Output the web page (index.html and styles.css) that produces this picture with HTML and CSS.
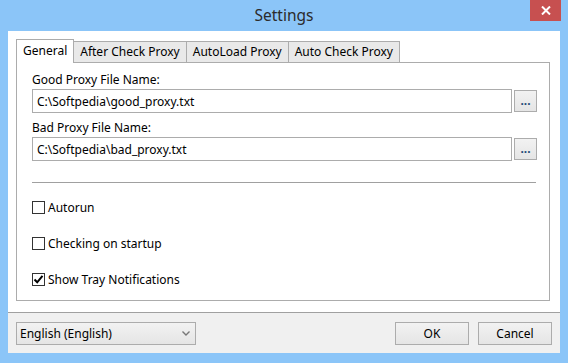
FILE: index.html
```html
<!DOCTYPE html>
<html lang="en">
<head>
  <meta charset="UTF-8">
  <title>Settings</title>
  <link rel="stylesheet" href="styles.css">
</head>
<body>
  <div class="window">
    <div class="titlebar">
      <span class="title">Settings</span>
      <button class="close" aria-label="Close">
        <svg width="10" height="9" viewBox="0 0 10 9"><path d="M1 0.5 L9 8.5 M9 0.5 L1 8.5" stroke="#fff" stroke-width="2"/></svg>
      </button>
    </div>

    <div class="client">
      <div class="main">
        <div class="tabs">
          <div class="tab active">General</div>
          <div class="tab">After Check Proxy</div>
          <div class="tab">AutoLoad Proxy</div>
          <div class="tab">Auto Check Proxy</div>
        </div>

        <div class="panel">
          <label class="field-label">Good Proxy File Name:</label>
          <div class="file-row">
            <input class="path" type="text" value="C:\Softpedia\good_proxy.txt">
            <button class="browse">...</button>
          </div>

          <label class="field-label second">Bad Proxy File Name:</label>
          <div class="file-row">
            <input class="path" type="text" value="C:\Softpedia\bad_proxy.txt">
            <button class="browse">...</button>
          </div>

          <div class="sep"></div>

          <div class="checks">
            <label class="check"><span class="box"></span>Autorun</label>
            <label class="check"><span class="box"></span>Checking on startup</label>
            <label class="check"><span class="box">
              <svg width="11" height="11" viewBox="0 0 11 11"><path d="M1.5 5.5 L4.2 8.3 L9.5 1.8" fill="none" stroke="#000" stroke-width="2"/></svg>
            </span>Show Tray Notifications</label>
          </div>
        </div>
      </div>

      <div class="footer">
        <div class="combo">
          <span>English (English)</span>
          <svg width="8" height="5" viewBox="0 0 8 5"><path d="M0.5 0.5 L4 4 L7.5 0.5" fill="none" stroke="#777" stroke-width="1.4"/></svg>
        </div>
        <div class="buttons">
          <button class="btn">OK</button>
          <button class="btn">Cancel</button>
        </div>
      </div>
    </div>
  </div>
</body>
</html>
```

FILE: styles.css
```css
* {
  box-sizing: border-box;
  margin: 0;
  padding: 0;
}

body {
  font-family: 'Noto Sans', 'Open Sans', sans-serif;
  font-size: 12px;
  color: #000;
  background: #8bc5f8;
}

.window {
  width: 568px;
  height: 363px;
  background: #8bc5f8;
  padding: 0 8px 10px 8px;
  display: flex;
  flex-direction: column;
}

.titlebar {
  height: 31px;
  margin: 0 -8px;
  display: grid;
  grid-template-columns: 38px 1fr 38px;
}

.title {
  grid-column: 2;
  text-align: center;
  line-height: 31px;
  font-size: 15.5px;
  color: #2b2b2b;
}

.close {
  grid-column: 3;
  width: 31px;
  height: 21px;
  border: none;
  background: #c75050;
  display: flex;
  align-items: center;
  justify-content: center;
}

.client {
  flex: 1;
  display: flex;
  flex-direction: column;
  background: #fff;
}

.main {
  flex: 1;
  padding: 8px 10px 11px 8px;
  display: flex;
  flex-direction: column;
}

.tabs {
  display: flex;
  align-items: flex-end;
  height: 23px;
}

.tab {
  height: 21px;
  line-height: 20px;
  padding: 0 6px;
  border: 1px solid #acacac;
  border-bottom: none;
  background: #e9e9e9;
  margin-left: -1px;
}

.tab.active {
  height: 24px;
  line-height: 22px;
  margin-left: 0;
  margin-bottom: -1px;
  padding: 0 6px;
  background: #fff;
  position: relative;
  z-index: 1;
}

.tab.active + .tab {
  margin-left: 0;
  border-left: none;
}

.panel {
  flex: 1;
  border: 1px solid #acacac;
  padding: 9px 12px 0 15px;
}

.field-label {
  display: block;
  line-height: 16px;
  margin-bottom: 1px;
}

.field-label.second {
  margin-top: 7px;
}

.file-row {
  display: flex;
  align-items: center;
  gap: 2px;
}

.path {
  flex: 1;
  height: 24px;
  border: 1px solid #acacac;
  padding: 0 4px;
  font-family: inherit;
  font-size: 12px;
  color: #000;
  outline: none;
}

.browse {
  width: 23px;
  height: 22px;
  border: 1px solid #acacac;
  background: linear-gradient(#f2f2f2, #e5e5e5);
  font-family: inherit;
  font-size: 12px;
  font-weight: bold;
  line-height: 16px;
  color: #1f4a78;
}

.sep {
  height: 1px;
  background: #a0a0a0;
  margin-top: 21px;
  width: 504px;
}

.checks {
  display: flex;
  flex-direction: column;
  gap: 20px;
  margin-top: 16px;
}

.check {
  display: flex;
  align-items: center;
  height: 16px;
  gap: 3px;
}

.box {
  width: 13px;
  height: 13px;
  border: 1px solid #333;
  background: #fff;
  display: flex;
  align-items: center;
  justify-content: center;
}

.footer {
  height: 41px;
  background: #f0f0f0;
  border-top: 1px solid #a0a0a0;
  display: flex;
  align-items: center;
  justify-content: space-between;
  padding: 0 8px;
}

.combo {
  width: 180px;
  height: 23px;
  border: 1px solid #acacac;
  background: linear-gradient(#f2f2f2, #e5e5e5);
  display: flex;
  align-items: center;
  justify-content: space-between;
  padding: 0 5px 0 3px;
}

.buttons {
  display: flex;
  gap: 9px;
}

.btn {
  width: 74px;
  height: 23px;
  border: 1px solid #acacac;
  background: linear-gradient(#f2f2f2, #e5e5e5);
  font-family: inherit;
  font-size: 12px;
  color: #000;
}
```
